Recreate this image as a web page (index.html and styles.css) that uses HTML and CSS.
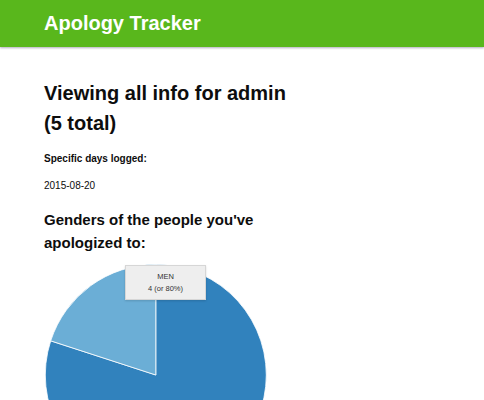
FILE: index.html
```html
<!DOCTYPE html>
<html>
<head>
<meta charset="utf-8">
<title>Apology Tracker</title>
<link rel="stylesheet" href="styles.css">
</head>
<body>
<header class="topbar">
  <span class="brand">Apology Tracker</span>
</header>
<main class="content">
  <h1 class="title">Viewing all info for admin (5 total)</h1>
  <p class="label">Specific days logged:</p>
  <p class="date">2015-08-20</p>
  <h2 class="subtitle">Genders of the people you've apologized to:</h2>
  <div class="chart">
    <svg class="pie" width="224" height="224" viewBox="0 0 224 224">
      <path d="M111.8 111 L111.8 0.5 A110.5 110.5 0 1 1 6.7 76.85 Z" fill="#3182bd" stroke="#fff" stroke-width="0.8"/>
      <path d="M111.8 111 L111.8 0.5 A110.5 110.5 0 0 0 6.7 76.85 Z" fill="#6baed6" stroke="#fff" stroke-width="0.8"/>
    </svg>
    <div class="tooltip">
      <div class="tip-name">MEN</div>
      <div class="tip-value">4 (or 80%)</div>
    </div>
  </div>
</main>
</body>
</html>
```
FILE: styles.css
```css
html, body {
  margin: 0;
  padding: 0;
  background: #fff;
}
body {
  font-family: "Liberation Sans", Arial, sans-serif;
  color: #0d0d0d;
}
.topbar {
  height: 47px;
  background: #59b71c;
  box-shadow: 0 1px 2px rgba(60, 50, 90, 0.4);
  padding-left: 44px;
  display: flex;
  align-items: center;
}
.brand {
  color: #fff;
  font-weight: bold;
  font-size: 20px;
  line-height: 46px;
  padding-bottom: 1px;
}
.content {
  padding-left: 44px;
  width: 250px;
}
.title {
  margin: 31px 0 0;
  font-size: 20px;
  line-height: 30px;
  font-weight: bold;
}
.label {
  margin: 13px 0 0;
  font-size: 10px;
  line-height: 15px;
  font-weight: bold;
}
.date {
  margin: 12px 0 0;
  font-size: 10px;
  line-height: 15px;
}
.subtitle {
  margin: 16px 0 0;
  font-size: 15px;
  line-height: 22.5px;
  font-weight: bold;
}
.chart {
  position: relative;
  margin-top: 10px;
  height: 224px;
}
.pie {
  display: block;
}
.tooltip {
  position: absolute;
  left: 81px;
  top: 1px;
  width: 79px;
  height: 33px;
  background: #eeeeee;
  border: 1px solid #d6d6d6;
  box-shadow: 0 1px 2px rgba(0, 0, 0, 0.15);
  display: flex;
  flex-direction: column;
  align-items: center;
  justify-content: center;
  font-size: 7.5px;
  line-height: 11.5px;
  color: #333;
}
```
